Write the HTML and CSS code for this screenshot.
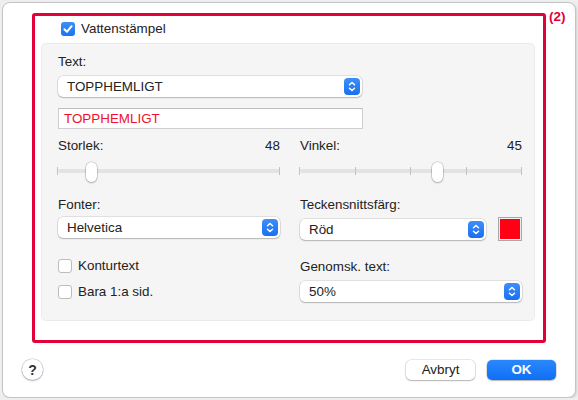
FILE: index.html
```html
<!DOCTYPE html>
<html lang="sv">
<head>
    <meta charset="UTF-8">
    <meta name="viewport" content="width=device-width, initial-scale=1.0">
    <title>Vattenstämpel</title>
    <link rel="stylesheet" href="styles.css">
</head>
<body>

<div class="dialog">
    <div class="frame">
        <span class="callout">(2)</span>

        <label class="check-row main-check">
            <span class="checkbox checked">
                <svg width="14" height="14" viewBox="0 0 14 14"><path d="M3.4 7.3 L5.9 9.8 L10.6 4.2" fill="none" stroke="#fff" stroke-width="2" stroke-linecap="round" stroke-linejoin="round"/></svg>
            </span>
            Vattenstämpel
        </label>

        <div class="panel">
            <div class="field-label">Text:</div>
            <div class="select text-select">
                <span>TOPPHEMLIGT</span>
                <span class="stepper">
                    <svg width="16" height="17" viewBox="0 0 16 17"><path d="M5.5 6.8 L8 4.5 L10.5 6.8 M5.5 10.2 L8 12.5 L10.5 10.2" fill="none" stroke="#fff" stroke-width="1.5" stroke-linecap="round" stroke-linejoin="round"/></svg>
                </span>
            </div>
            <div class="text-input">TOPPHEMLIGT</div>

            <div class="columns">
                <div class="col">
                    <div class="value-row"><span>Storlek:</span><span>48</span></div>
                    <div class="slider">
                        <div class="track"></div>
                        <span class="tick" style="left: 0%"></span>
                        <span class="tick" style="left: 100%"></span>
                        <span class="thumb" style="left: 15.5%"></span>
                    </div>

                    <div class="field-label fonts-label">Fonter:</div>
                    <div class="select">
                        <span>Helvetica</span>
                        <span class="stepper">
                            <svg width="16" height="17" viewBox="0 0 16 17"><path d="M5.5 6.8 L8 4.5 L10.5 6.8 M5.5 10.2 L8 12.5 L10.5 10.2" fill="none" stroke="#fff" stroke-width="1.5" stroke-linecap="round" stroke-linejoin="round"/></svg>
                        </span>
                    </div>

                    <label class="check-row outline-check"><span class="checkbox"></span>Konturtext</label>
                    <label class="check-row page-check"><span class="checkbox"></span>Bara 1:a sid.</label>
                </div>

                <div class="col">
                    <div class="value-row"><span>Vinkel:</span><span>45</span></div>
                    <div class="slider">
                        <div class="track"></div>
                        <span class="tick" style="left: 0%"></span>
                        <span class="tick" style="left: 25%"></span>
                        <span class="tick" style="left: 50%"></span>
                        <span class="tick" style="left: 75%"></span>
                        <span class="tick" style="left: 100%"></span>
                        <span class="thumb" style="left: 62%"></span>
                    </div>

                    <div class="field-label fonts-label">Teckensnittsfärg:</div>
                    <div class="color-row">
                        <div class="select">
                            <span>Röd</span>
                            <span class="stepper">
                                <svg width="16" height="17" viewBox="0 0 16 17"><path d="M5.5 6.8 L8 4.5 L10.5 6.8 M5.5 10.2 L8 12.5 L10.5 10.2" fill="none" stroke="#fff" stroke-width="1.5" stroke-linecap="round" stroke-linejoin="round"/></svg>
                            </span>
                        </div>
                        <span class="swatch"></span>
                    </div>

                    <div class="field-label opacity-label">Genomsk. text:</div>
                    <div class="select opacity-select">
                        <span>50%</span>
                        <span class="stepper">
                            <svg width="16" height="17" viewBox="0 0 16 17"><path d="M5.5 6.8 L8 4.5 L10.5 6.8 M5.5 10.2 L8 12.5 L10.5 10.2" fill="none" stroke="#fff" stroke-width="1.5" stroke-linecap="round" stroke-linejoin="round"/></svg>
                        </span>
                    </div>
                </div>
            </div>
        </div>
    </div>

    <div class="footer">
        <button class="help">?</button>
        <div class="actions">
            <button class="btn">Avbryt</button>
            <button class="btn primary">OK</button>
        </div>
    </div>
</div>

</body>
</html>
```

FILE: styles.css
```css
body {
    font-family: "Liberation Sans", Arial, sans-serif;
    font-size: 13.4px;
    color: #222;
    margin: 0;
    padding: 2px 0 0 2px;
    background-color: #eeeeee;
}
.dialog {
    width: 574px;
    height: 396px;
    box-sizing: border-box;
    background-color: white;
    border: 1px solid #c4c4c4;
    border-radius: 8px;
    box-shadow: 1px 1px 2px rgba(0, 0, 0, 0.12);
}
.frame {
    position: relative;
    box-sizing: border-box;
    width: 514px;
    height: 330px;
    margin: 10px 0 0 29px;
    border: 3px solid #e2003b;
    border-radius: 3px;
}
.callout {
    position: absolute;
    left: calc(100% + 6px);
    top: -7px;
    color: #e2003b;
    font-weight: bold;
    font-size: 13.5px;
    line-height: 16px;
}
.check-row {
    display: flex;
    align-items: center;
    height: 16px;
    line-height: 16px;
}
.checkbox {
    width: 14px;
    height: 14px;
    box-sizing: border-box;
    border: 1px solid #bdbdbd;
    border-radius: 3px;
    background-color: white;
    margin-right: 6px;
    flex: none;
}
.checkbox.checked {
    border: none;
    background: linear-gradient(#3d8ff8, #1a74f2);
}
.checkbox svg {
    display: block;
}
.main-check {
    margin: 5px 0 0 26px;
}
.panel {
    box-sizing: border-box;
    width: 494px;
    height: 278px;
    margin: 6px 0 0 6px;
    padding: 10px 12px 0 16px;
    background-color: #f5f5f5;
    border: 1px solid #ebebeb;
    border-radius: 5px;
}
.field-label {
    line-height: 16px;
}
.select {
    display: flex;
    align-items: center;
    justify-content: space-between;
    box-sizing: border-box;
    height: 21px;
    padding: 0 2px 0 9px;
    background-color: white;
    border-radius: 5px;
    box-shadow: 0 0 0 0.5px rgba(0, 0, 0, 0.16), 0 1px 1.5px rgba(0, 0, 0, 0.2);
}
.stepper {
    width: 16px;
    height: 17px;
    border-radius: 4px;
    background: linear-gradient(#3d8ff8, #1a6ff2);
}
.stepper svg {
    display: block;
}
.text-select {
    width: 304px;
    margin-top: 6px;
}
.text-input {
    box-sizing: border-box;
    width: 305px;
    height: 21px;
    margin-top: 11px;
    padding-left: 5px;
    line-height: 19px;
    color: #f0102d;
    background-color: white;
    border: 1px solid #cfcfcf;
    border-top-color: #bdbdbd;
}
.columns {
    display: grid;
    grid-template-columns: 222px 222px;
    column-gap: 20px;
    margin-top: 9px;
}
.value-row {
    display: flex;
    justify-content: space-between;
    line-height: 16px;
}
.slider {
    position: relative;
    height: 20px;
    margin-top: 8px;
}
.track {
    position: absolute;
    left: 0;
    right: 0;
    top: 7px;
    height: 4px;
    border-radius: 2px;
    background-color: #e3e3e3;
}
.tick {
    position: absolute;
    top: 5px;
    width: 1px;
    height: 8px;
    margin-left: -1px;
    background-color: #c2c2c2;
}
.thumb {
    position: absolute;
    top: 0;
    width: 11px;
    height: 20px;
    margin-left: -6px;
    box-sizing: border-box;
    border-radius: 6px;
    background-color: white;
    box-shadow: 0 0 0 0.5px rgba(0, 0, 0, 0.22), 0 1px 2px rgba(0, 0, 0, 0.25);
}
.fonts-label {
    margin-top: 15px;
}
.fonts-label + .select,
.fonts-label + .color-row {
    margin-top: 4px;
}
.outline-check {
    margin-top: 20px;
}
.page-check {
    margin-top: 10px;
}
.color-row {
    display: flex;
    align-items: center;
    gap: 12px;
}
.color-row .select {
    flex: 1;
}
.swatch {
    width: 24px;
    height: 24px;
    box-sizing: border-box;
    border: 1px solid #a8a8a8;
    background-color: #ff0014;
    box-shadow: inset 0 0 0 1px #f0f0f0;
}
.opacity-label {
    margin-top: 18px;
}
.opacity-select {
    margin-top: 6px;
}
.footer {
    display: flex;
    align-items: center;
    justify-content: space-between;
    margin-top: 16px;
    padding: 0 19px;
}
.help {
    width: 21px;
    height: 21px;
    padding: 0;
    border: none;
    border-radius: 50%;
    background-color: white;
    box-shadow: 0 0 0 0.5px rgba(0, 0, 0, 0.2), 0 1px 2px rgba(0, 0, 0, 0.25);
    font-family: "Liberation Sans", Arial, sans-serif;
    font-size: 14px;
    font-weight: bold;
    color: #333;
}
.actions {
    display: flex;
    gap: 12px;
}
.btn {
    width: 69px;
    height: 20px;
    padding: 0;
    border: none;
    border-radius: 5px;
    background-color: white;
    box-shadow: 0 0 0 0.5px rgba(0, 0, 0, 0.18), 0 1px 1.5px rgba(0, 0, 0, 0.22);
    font-family: "Liberation Sans", Arial, sans-serif;
    font-size: 13.4px;
    color: #222;
}
.btn.primary {
    background: linear-gradient(#2a88fb, #0f6ff5);
    color: white;
    font-weight: bold;
}
```
